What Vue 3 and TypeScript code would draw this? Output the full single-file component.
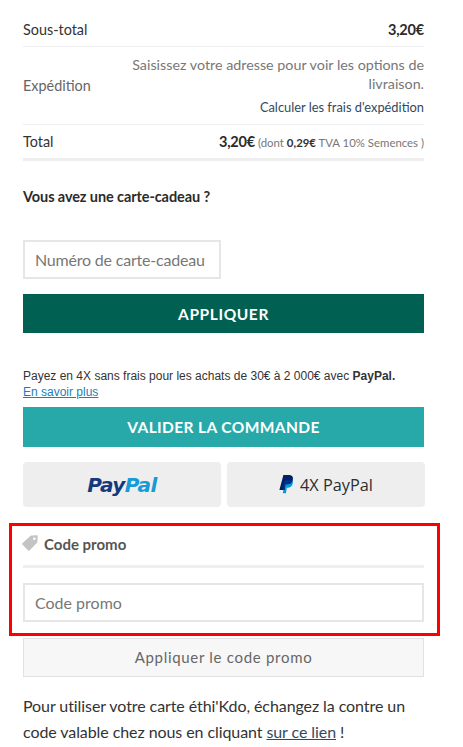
<script setup lang="ts">
const rowsNote = "(dont";
</script>

<template>
  <main class="page">
    <section class="totals">
      <div class="row row-sub">
        <span>Sous-total</span>
        <strong class="amount">3,20€</strong>
      </div>
      <div class="row row-ship">
        <span class="muted">Expédition</span>
        <div class="ship">
          <p class="ship-text">Saisissez votre adresse pour voir les options de livraison.</p>
          <a class="ship-link">Calculer les frais d'expédition</a>
        </div>
      </div>
      <div class="row row-total">
        <span>Total</span>
        <span class="total-value">
          <strong class="amount">3,20€</strong>
          <small class="tax">{{ rowsNote }} <b>0,29€</b> TVA 10% Semences )</small>
        </span>
      </div>
    </section>

    <h3 class="gift-title">Vous avez une carte-cadeau ?</h3>
    <input class="field gift-field" placeholder="Numéro de carte-cadeau" />
    <button class="cta dark">APPLIQUER</button>

    <p class="pay4x">Payez en 4X sans frais pour les achats de 30€ à 2 000€ avec <b>PayPal.</b><br /><a>En savoir plus</a></p>
    <button class="cta teal">VALIDER LA COMMANDE</button>

    <div class="wallets">
      <button class="wallet">
        <span class="pp-logo"><span class="pp-a">Pay</span><span class="pp-b">Pal</span></span>
      </button>
      <button class="wallet">
        <svg class="pp-mark" viewBox="0 0 16 20" width="16" height="19">
          <path fill="#009cde" d="M13.4 5.2c.9 1 1 2.500.6 4-.7 3-2.800 4.300-5.400 4.300H7.800l-.9 5.700H3.600l.5-3.200 3.300-8z" />
          <path fill="#012169" d="M4.200 0h5.600c3.200 0 5 1.700 4.400 4.700-.7 3.500-3 5.100-6 5.100H6.400l-1 5.900H0z" />
          <path fill="#003087" d="M5.300 5.600h8.500c-.8 2.800-3 4.200-5.800 4.200H6.400l-1 5.900H3.900z" />
        </svg>
        <span class="wallet-text">4X PayPal</span>
      </button>
    </div>

    <section class="promo">
      <div class="promo-head">
        <svg class="tag" viewBox="0 0 16 16" width="16" height="16">
          <path fill="#c4c4c4" d="M9.200.6 15 .2c.5 0 .8.300.8.800l-.4 5.800c0 .4-.2.700-.4.900l-7.500 7.700c-.4.400-1 .4-1.400 0L.4 9.600c-.4-.4-.4-1 0-1.400L8.300 1c.3-.2.600-.4.900-.4z" />
          <circle cx="12.300" cy="3.700" r="1.300" fill="#fff" />
        </svg>
        <strong>Code promo</strong>
      </div>
      <input class="field promo-field" placeholder="Code promo" />
    </section>

    <button class="promo-btn">Appliquer le code promo</button>

    <p class="note">Pour utiliser votre carte éthi'Kdo, échangez la contre un code valable chez nous en cliquant <a>sur ce lien</a> !</p>
  </main>
</template>

<style>
html, body { overflow: hidden; }
</style>

<style scoped>
.page {
  box-sizing: border-box;
  width: 463px;
  height: 747px;
  overflow: hidden;
  padding-left: 23px;
  font-family: Lato, sans-serif;
  color: #333;
  font-size: 14.400px;
}
.totals { width: 401px; }
.row {
  display: flex;
  justify-content: space-between;
  align-items: center;
  border-bottom: 1px solid #eee;
}
.row-sub { padding-top: 12px; height: 34px; }
.row-ship { height: 77px; }
.row-total { height: 33px; border-bottom: 3px solid #eee; }
.amount { font-size: 14.500px; font-weight: 700; color: #2b2b2b; letter-spacing: -0.2px; }
.muted { color: #666; }
.ship { text-align: right; width: 300px; }
.ship-text { margin: 0; color: #777; line-height: 19px; font-size: 14.300px; }
.ship-link { display: block; margin-top: 5px; color: #34495e; font-size: 12.850px; line-height: 18px; }
.tax { color: #777; font-size: 11.400px; margin-left: 3px; }
.tax b { color: #333; }
.gift-title {
  margin: 26px 0 0;
  font-size: 14.500px;
  line-height: 20px;
  font-weight: 700;
  letter-spacing: -0.1px;
  color: #2b2b2b;
}
.field {
  display: block;
  box-sizing: border-box;
  height: 39px;
  padding: 0 10px;
  border: 2px solid #e6e6e6;
  background: #fff;
  font-family: Lato, sans-serif;
  font-size: 16px;
  outline: none;
}
.field::placeholder { color: #777; opacity: 1; }
.gift-field { width: 198px; margin-top: 33px; letter-spacing: -0.2px; }
.cta {
  display: block;
  width: 401px;
  border: 0;
  color: #fff;
  font-family: Lato, sans-serif;
  font-weight: 700;
  letter-spacing: 0.6px;
}
.dark { height: 39px; margin-top: 15px; background: #006153; font-size: 15.500px; }
.pay4x {
  width: 401px;
  margin: 35px 0 0;
  font-family: "Liberation Sans", sans-serif;
  font-size: 12px;
  line-height: 16px;
  color: #333;
}
.pay4x a { color: #1b7fb8; text-decoration: underline; }
.teal { height: 40px; margin-top: 7px; background: #27a9aa; font-size: 15.500px; letter-spacing: 0.4px; }
.wallets { display: flex; gap: 6px; margin-top: 15px; width: 402px; }
.wallet {
  flex: 1;
  height: 45px;
  border: 0;
  border-radius: 4px;
  background: #eee;
  display: flex;
  align-items: center;
  justify-content: center;
  gap: 5px;
  padding: 0;
}
.pp-logo {
  font-family: "DejaVu Sans", sans-serif;
  font-style: italic;
  font-weight: 700;
  font-size: 20px;
  letter-spacing: -0.6px;
}
.pp-a { color: #14397f; }
.pp-b { color: #179bd7; }
.wallet-text {
  font-family: "Open Sans", sans-serif;
  font-size: 16.300px;
  color: #2c2e2f;
}
.promo {
  box-sizing: border-box;
  width: 431px;
  height: 113px;
  margin: 16px 0 0 -14px;
  padding: 0 13px 0 11px;
  border: 3px solid #f00;
}
.promo-head {
  display: flex;
  align-items: center;
  gap: 6px;
  height: 36px;
  padding-bottom: 3px;
  border-bottom: 3px solid #eee;
  color: #555;
  font-size: 15px;
}
.tag { margin-top: -2px; margin-left: -1px; }
.promo-field { width: 401px; margin-top: 15px; }
.promo-btn {
  display: block;
  box-sizing: border-box;
  width: 401px;
  height: 39px;
  margin-top: 2px;
  border: 1px solid #e2e2e2;
  background: #f7f7f7;
  color: #666;
  font-family: Lato, sans-serif;
  font-size: 15px;
  letter-spacing: 0.7px;
  padding-bottom: 2px;
}
.note {
  width: 401px;
  margin: 16px 0 0;
  font-size: 16px;
  line-height: 26px;
  color: #333;
  letter-spacing: -0.08px;
}
.note a { color: #34495e; text-decoration: underline; }
</style>
